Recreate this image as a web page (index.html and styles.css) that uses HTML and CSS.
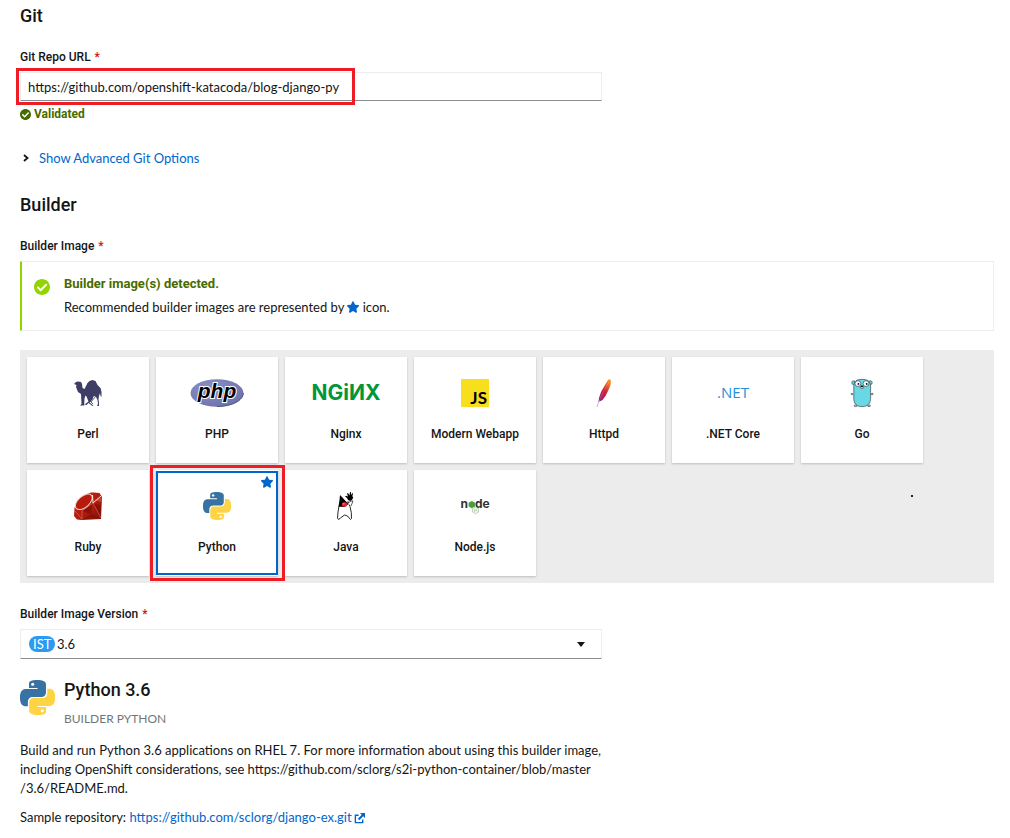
FILE: index.html
```html
<!DOCTYPE html>
<html lang="en">
<head>
<meta charset="utf-8">
<meta name="viewport" content="width=device-width, initial-scale=1">
<title>Import from Git</title>
<link rel="stylesheet" href="styles.css">
</head>
<body>
<svg class="defs" aria-hidden="true">
  <symbol id="check" viewBox="8 8 496 496"><path fill="currentColor" d="M504 256c0 136.967-111.033 248-248 248S8 392.967 8 256 119.033 8 256 8s248 111.033 248 248zM227.314 387.314l184-184c6.248-6.248 6.248-16.379 0-22.627l-22.627-22.627c-6.248-6.249-16.379-6.249-22.628 0L216 308.118l-70.059-70.059c-6.248-6.248-16.379-6.248-22.628 0l-22.627 22.627c-6.248 6.248-6.248 16.379 0 22.627l104 104c6.249 6.249 16.379 6.249 22.628.001z"/></symbol>
  <symbol id="star" viewBox="20 0 536 512"><path fill="currentColor" d="M259.3 17.8L194 150.2 47.9 171.5c-26.2 3.8-36.7 36.1-17.7 54.6l105.7 103-25 145.5c-4.5 26.3 23.2 46 46.4 33.7L288 439.6l130.7 68.7c23.2 12.2 50.9-7.4 46.4-33.7l-25-145.5 105.7-103c19-18.5 8.5-50.8-17.7-54.6L382 150.2 316.7 17.8c-11.7-23.6-45.6-23.9-57.4 0z"/></symbol>
  <symbol id="python" viewBox="0 0 24 24">
    <path fill="#3872a3" d="M14.25.18l.9.2.73.26.59.3.45.32.34.34.25.34.16.33.1.3.04.26.02.2-.01.13V8.5l-.05.63-.13.55-.21.46-.26.38-.3.31-.33.25-.35.19-.35.14-.33.1-.3.07-.26.04-.21.02H8.77l-.69.05-.59.14-.5.22-.41.27-.33.32-.27.35-.2.36-.15.37-.1.35-.07.32-.04.27-.02.21v3.06H3.17l-.21-.03-.28-.07-.32-.12-.35-.18-.36-.26-.36-.36-.35-.46-.32-.59-.28-.73-.21-.88-.14-1.05-.05-1.23.06-1.22.16-1.04.24-.87.32-.71.36-.57.4-.44.42-.33.42-.24.4-.16.36-.1.32-.05.24-.01h.16l.06.01h8.16v-.83H6.18l-.01-2.75-.02-.37.05-.34.11-.31.17-.28.25-.26.31-.23.38-.2.44-.18.51-.15.58-.12.64-.1.71-.06.77-.04.84-.02 1.27.05z"/>
    <path fill="#ffd444" d="M21.1 6.11l.28.06.32.12.35.18.36.27.36.35.35.47.32.59.28.73.21.88.14 1.04.05 1.23-.06 1.23-.16 1.04-.24.86-.32.71-.36.57-.4.45-.42.33-.42.24-.4.16-.36.09-.32.05-.24.02-.16-.01h-8.22v.82h5.84l.01 2.76.02.36-.05.34-.11.31-.17.29-.25.25-.31.24-.38.2-.44.17-.51.15-.58.13-.64.09-.71.07-.77.04-.84.01-1.27-.04-1.07-.14-.9-.2-.73-.25-.59-.3-.45-.33-.34-.34-.25-.34-.16-.33-.1-.3-.04-.25-.02-.2.01-.13v-5.34l.05-.64.13-.54.21-.46.26-.38.3-.32.33-.24.35-.2.35-.14.33-.1.3-.06.26-.04.21-.02.13-.01h5.84l.69-.05.59-.14.5-.21.41-.28.33-.32.27-.35.2-.36.15-.36.1-.35.07-.32.04-.28.02-.21V6.07h2.09l.14.01z"/>
    <circle fill="#fff" cx="8.7" cy="2.9" r="1.05"/><circle fill="#fff" cx="15.3" cy="21.1" r="1.05"/>
  </symbol>
</svg>

<main class="form">
  <h2 class="heading">Git</h2>
  <section class="field">
    <label class="label" for="repo">Git Repo URL <span class="required">*</span></label>
    <div class="control marked">
      <input class="input" id="repo" type="text" value="https://github.com/openshift-katacoda/blog-django-py">
      <span class="mark mark-url"></span>
    </div>
    <p class="valid"><svg class="icon-small"><use href="#check"/></svg>Validated</p>
  </section>
  <button class="toggle" type="button"><svg class="chevron" viewBox="0 0 6 8"><path d="M1 1l3.500 3L1 7" fill="none" stroke="#151515" stroke-width="1.800"/></svg>Show Advanced Git Options</button>

  <h2 class="heading">Builder</h2>
  <section class="field">
    <p class="label" id="builder-label">Builder Image <span class="required">*</span></p>
    <div class="alert">
      <svg class="alert-icon"><use href="#check"/></svg>
      <div>
        <h4 class="alert-title">Builder image(s) detected.</h4>
        <p class="alert-text">Recommended builder images are represented by <svg class="star-inline"><use href="#star"/></svg> icon.</p>
      </div>
    </div>
  </section>

  <div class="tiles" role="group" aria-labelledby="builder-label">
    <button class="tile" type="button">
      <svg class="logo" viewBox="0 0 28 28"><path fill="#3d3d66" d="M0 5l2-2 2-.500 3 .500 1 2 .500 4 2 1 3-6 2-2 3-1 3 1 2 4 3 3 1 4v5l-1-1-.500-3-1 3-.500 3 .500 4v3h-2l1-2-.500-4-2-4-2 .500-1 3-3 3 4 3-1 .500-4-3-2 2-2-.500 4-3-2-5-1-1-1 3-.300 7H6l1.500-1.500L7 15l-3-2-2-5 .500-2z"/><path d="M16 17l-1 4 4 4M22 17l-5 6" fill="none" stroke="#3d3d66" stroke-width=".8"/></svg>
      <span class="tile-name">Perl</span>
    </button>
    <button class="tile" type="button">
      <svg class="logo logo-wide" viewBox="0 0 54 28"><defs><radialGradient id="php-fill" cx=".35" cy=".3" r=".8"><stop offset="0" stop-color="#8a8fc4"/><stop offset="1" stop-color="#6c71aa"/></radialGradient></defs><ellipse cx="27" cy="14" rx="26.500" ry="13.800" fill="url(#php-fill)"/><path d="M53.300 14c0 7.600-11.800 13.500-26.300 13.500" fill="none" stroke="#4c5185" stroke-width="1"/><text class="php" x="27" y="19" text-anchor="middle">php</text></svg>
      <span class="tile-name">PHP</span>
    </button>
    <button class="tile" type="button">
      <svg class="logo logo-full" viewBox="0 0 74 28"><text class="nginx" x="37" y="21" text-anchor="middle">NGiИX</text></svg>
      <span class="tile-name">Nginx</span>
    </button>
    <button class="tile" type="button">
      <svg class="logo" viewBox="0 0 28 28"><path fill="#f7df1e" d="M0 0h28v28H0z"/><text class="js" x="26" y="25" text-anchor="end">JS</text></svg>
      <span class="tile-name">Modern Webapp</span>
    </button>
    <button class="tile" type="button">
      <svg class="logo" viewBox="0 0 28 28"><defs><linearGradient id="feather" x1=".8" y1="0" x2=".2" y2="1"><stop offset="0" stop-color="#f79a23"/><stop offset=".3" stop-color="#e0522d"/><stop offset=".5" stop-color="#cb2039"/><stop offset=".8" stop-color="#b21f5a"/><stop offset="1" stop-color="#6a2b85"/></linearGradient></defs><path fill="url(#feather)" d="M20 0l1 2-.500 4-2 5-3 6-3 4-4 2 .500-4 2-6 4-7 3-5z"/><path d="M19 3C14 11 10 19 7 28" fill="none" stroke="#fff" stroke-opacity=".35" stroke-width=".5"/><path d="M9.300 21Q8 24 7 28" fill="none" stroke="#b7a3c8" stroke-width=".8"/></svg>
      <span class="tile-name">Httpd</span>
    </button>
    <button class="tile" type="button">
      <svg class="logo logo-wide" viewBox="0 0 54 28"><text class="dotnet" x="27" y="19" text-anchor="middle">.NET</text></svg>
      <span class="tile-name">.NET Core</span>
    </button>
    <button class="tile" type="button">
      <svg class="logo" viewBox="0 0 28 28"><g stroke="#35494d" stroke-width=".7"><circle cx="5.700" cy="3.700" r="1.900" fill="#6ad7e5"/><circle cx="22.300" cy="3.700" r="1.900" fill="#6ad7e5"/><ellipse cx="4" cy="15" rx="1" ry=".7" fill="#f6d2a2"/><ellipse cx="24.200" cy="15" rx="1" ry=".7" fill="#f6d2a2"/><ellipse cx="7.500" cy="26.800" rx="1.500" ry=".8" fill="#f6d2a2"/><ellipse cx="21" cy="26.800" rx="1.500" ry=".8" fill="#f6d2a2"/><path fill="#6ad7e5" d="M14 .4C8.500.4 6 2 5.800 7c-.2 3 .2 5 0 9-.3 6 .2 11.600 8.200 11.600S23 22 22.600 16c-.3-4 .2-6 0-9C22.300 2 19.500.4 14 .4z"/><circle cx="9.900" cy="4.600" r="2.900" fill="#fff"/><circle cx="18" cy="4.600" r="2.900" fill="#fff"/><ellipse cx="14" cy="8.300" rx="1.800" ry="1.100" fill="#f6d2a2"/></g><circle cx="10.400" cy="4.900" r=".9"/><circle cx="18.700" cy="4.900" r=".9"/><ellipse cx="14" cy="7.200" rx="1.300" ry=".8"/></svg>
      <span class="tile-name">Go</span>
    </button>
    <button class="tile" type="button">
      <svg class="logo" viewBox="0 0 28 28"><defs><linearGradient id="ruby" x1="0" y1="0" x2="1" y2="1"><stop offset="0" stop-color="#c42518"/><stop offset=".5" stop-color="#b51c0d"/><stop offset="1" stop-color="#7f1208"/></linearGradient></defs><path fill="url(#ruby)" d="M20 .500l5.500.500 2.500 4-1 22-19 1-5-.500L0 24l.500-8L3 9l7-6 7-2.500z"/><path fill="#8a1106" d="M19 12l8 13V13zM8 19l10-7-1 10zM9 27l9-5 7 4z"/><path fill="#d93a2c" d="M20 8l7 2 1-5z"/><ellipse cx="9.800" cy="9.800" rx="10" ry="5.600" transform="rotate(-41 9.800 9.800)" fill="#b81a0e" stroke="#f6d3ce" stroke-width="1"/><path d="M18.500 3l.5 8 8-7" fill="none" stroke="#fff" stroke-width=".9"/><path d="M19 11l8 15M19 11L8 19v8M1 19l7 8" fill="none" stroke="#e2897f" stroke-width=".5"/></svg>
      <span class="tile-name">Ruby</span>
    </button>
    <button class="tile tile-selected marked" type="button" aria-pressed="true">
      <svg class="logo"><use href="#python"/></svg>
      <span class="tile-name">Python</span>
      <svg class="tile-star"><use href="#star"/></svg>
      <span class="mark mark-tile"></span>
    </button>
    <button class="tile" type="button">
      <svg class="logo" viewBox="0 0 28 28"><path fill="#fff" stroke="#111" stroke-width=".9" d="M7 14l-1 6-.500 6 1 1.500 2-1.500 4-3 3 1 3 3.500 1-1-.200-6-1.300-6-2-5-4 4z"/><path fill="#000" d="M8 3l1 1 6 6.500 1.500 1.500-4 3-6-.500L7.500 8zM16 8l-1-2-2-1.500 1-.7 2 .7-1-3 1-.500 1.500 2.500L18 0l1 .300.200 3L20.300 1l.7.500-.700 3 1 .500-1 2.500-2 1.500z"/><path d="M16 11l3-2 2 0-2 5" fill="#fff" stroke="#111" stroke-width=".7"/><ellipse cx="12.500" cy="12.500" rx="2.700" ry="2.200" fill="#e3232c"/><circle cx="11.800" cy="11.800" r=".8" fill="#ff8b87"/></svg>
      <span class="tile-name">Java</span>
    </button>
    <button class="tile" type="button">
      <svg class="logo logo-wide" viewBox="0 0 54 28"><text class="node" x="20" y="16" text-anchor="end">n</text><path fill="#4a9f3d" d="M23.800 9l3.200 1.800v3.600l-3.200 1.800-3.200-1.800v-3.600z"/><text class="node" x="27" y="16">de</text><path fill="#f2f8ef" stroke="#a6cf9e" stroke-width=".8" d="M27.500 15l3 1.700V20l-3 1.700-3-1.700v-3.300z"/><path d="M26.800 17v3M29 17.500l-1 .800 1 1" stroke="#8fc284" stroke-width=".7" fill="none"/></svg>
      <span class="tile-name">Node.js</span>
    </button>
    <span class="speck"></span>
  </div>

  <section class="field">
    <label class="label" for="version">Builder Image Version <span class="required">*</span></label>
    <div class="control marked">
      <select class="input select" id="version"><option>3.6</option></select>
      <span class="badge">IST</span>
      <svg class="caret" viewBox="0 0 8 5"><path fill="#151515" d="M0 0h8L4 5z"/></svg>
    </div>
  </section>

  <section class="details">
    <div class="summary">
      <svg class="summary-logo"><use href="#python"/></svg>
      <div>
        <h3 class="heading summary-title">Python 3.6</h3>
        <p class="tags">BUILDER PYTHON</p>
      </div>
    </div>
    <p class="text">Build and run Python 3.6 applications on RHEL 7. For more information about using this builder image, including OpenShift considerations, see <span class="unbroken">https://github.com/sclorg/s2i-python-container/blob/master</span><wbr>/3.6/README.md.</p>
    <p class="text">Sample repository: <a class="link" href="https://github.com/sclorg/django-ex.git">https://github.com/sclorg/django-ex.git<svg class="external" viewBox="0 0 12 12"><path d="M5 2.500H1.500v8h8V7" fill="none" stroke="currentColor" stroke-width="1.500"/><path d="M6.500 0H12v5.500L10 3.600 5.800 7.800 4.300 6.300 8.400 2z" fill="currentColor"/></svg></a></p>
  </section>
</main>
</body>
</html>
```
FILE: styles.css
```css
* { box-sizing: border-box; }
body {
  margin: 0;
  background: #fff;
  color: #151515;
  font: 13px/19px Lato, "Liberation Sans", sans-serif;
}
h2, h3, h4, p { margin: 0; }
button, input, select { font: inherit; color: inherit; }
.defs { position: absolute; width: 0; height: 0; }

.form { padding: 4px 16px 10px 20px; }
.heading {
  font: 500 18px/24px Roboto, sans-serif;
}
.field { margin-top: 20px; }
.label {
  display: block;
  margin-bottom: 6px;
  font: 500 12px/18px Roboto, sans-serif;
}
.required { color: #c9190b; margin-left: 1px; }
.control, .details { max-width: 582px; }
.marked { position: relative; }
.input {
  display: block;
  width: 100%;
  height: 29px;
  padding: 0 7px;
  border: 1px solid #ededed;
  border-bottom-color: #8a8d90;
  border-radius: 0;
  background: #fff;
  outline: none;
}
.mark { position: absolute; border: 3px solid #ee1c25; pointer-events: none; }
.mark-url { left: -4px; top: -4px; width: 339px; height: 37px; }
.valid {
  display: flex;
  align-items: center;
  gap: 3px;
  margin-top: 4px;
  color: #486b00;
  font: 700 12px/18px Roboto, sans-serif;
}
.icon-small { width: 11px; height: 11px; }
.toggle {
  display: flex;
  align-items: center;
  gap: 10px;
  margin: 25px 0;
  padding: 0 0 0 3px;
  border: 0;
  background: none;
  color: #06c;
  line-height: 20px;
}
.chevron { width: 6px; height: 8px; }

.alert {
  display: flex;
  gap: 14px;
  padding: 12px;
  border: 1px solid #ededed;
  border-left: 2px solid #92d400;
}
.alert-icon { flex: none; width: 16px; height: 16px; margin-top: 5px; color: #92d400; }
.alert-title { color: #486b00; font: 700 13px/20px Roboto, sans-serif; }
.alert-text { margin-top: 2px; line-height: 22px; }
.star-inline { width: 12px; height: 12px; color: #06c; vertical-align: -1px; }

.tiles {
  position: relative;
  display: grid;
  grid-template-columns: repeat(7, 122px);
  gap: 7px;
  margin-top: 19px;
  padding: 7px;
  background: #ececec;
}
.tile {
  display: flex;
  flex-direction: column;
  align-items: center;
  gap: 18px;
  padding: 22px 0 20px;
  border: 0;
  background: #fff;
  box-shadow: 0 1px 2px rgba(3, 3, 3, 0.2);
}
.tile-name { font: 500 12px/18px Roboto, sans-serif; }
.tile-selected::before {
  content: "";
  position: absolute;
  inset: 1px 0;
  border: 2px solid #06c;
}
.tile-star { position: absolute; top: 6px; right: 5px; width: 12px; height: 12px; color: #06c; }
.mark-tile { inset: -5px -7px -5px -6px; }
.logo { width: 28px; height: 28px; overflow: visible; }
.logo-wide { width: 54px; }
.logo-full { width: 74px; }
.php {
  font: italic 700 21px "Liberation Sans", sans-serif;
  stroke: #fff;
  stroke-width: 2px;
  paint-order: stroke;
}
.nginx { font: 700 21px "Inter", sans-serif; fill: #009639; }
.js { font: 700 17px Lato, sans-serif; }
.dotnet { font: 400 15px "Open Sans", sans-serif; fill: #1e90dc; }
.node { font: 700 12px "Inter", sans-serif; fill: #333; }
.speck { position: absolute; right: 81px; top: 145px; width: 2px; height: 2px; background: #222; }

.tiles + .field { margin-top: 22px; }
.select { height: 30px; padding-left: 36px; appearance: none; }
.badge {
  position: absolute;
  left: 9px;
  top: 7px;
  padding: 0 4px;
  border-radius: 8px;
  background: #2b9af3;
  color: #fff;
  line-height: 16px;
}
.caret { position: absolute; right: 17px; top: 13px; width: 8px; height: 5px; }

.details { margin-top: 19px; }
.summary { display: flex; gap: 9px; }
.summary-logo { width: 35px; height: 35px; margin-top: 2px; }
.tags { margin-top: 8px; color: #72767b; font-size: 12px; line-height: 18px; }
.text { margin-top: 10px; }
.summary + .text { margin-top: 13px; }
.unbroken { white-space: nowrap; }
.link { color: #06c; text-decoration: none; }
.external { width: 11px; height: 11px; margin-left: 2px; vertical-align: -2px; }
```
